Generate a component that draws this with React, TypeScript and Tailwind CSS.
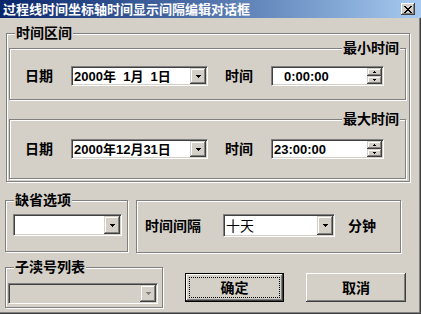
import React from 'react';

const sunken =
  'border border-t-[#808080] border-l-[#808080] border-r-white border-b-white shadow-[inset_1px_1px_0_#404040,inset_-1px_-1px_0_#d4d0c8] p-[1px]';
const comboBtn =
  'bg-[#d4d0c8] shadow-[inset_-1px_-1px_0_#404040,inset_1px_1px_0_#d4d0c8,inset_-2px_-2px_0_#808080,inset_2px_2px_0_#fff]';
const pushBtn =
  'bg-[#d4d0c8] shadow-[inset_-1px_-1px_0_#404040,inset_1px_1px_0_#fff,inset_-2px_-2px_0_#808080]';
const etched = 'border border-[#808080] shadow-[inset_1px_1px_0_#fff,1px_1px_0_#fff]';

function Arrow({ color = '#000' }: { color?: string }) {
  return (
    <svg width="5" height="3" viewBox="0 0 5 3" shapeRendering="crispEdges">
      <path d="M0 0h5v1H0zM1 1h3v1H1zM2 2h1v1H2z" fill={color} />
    </svg>
  );
}

function Group({
  label,
  right,
  className,
  children,
}: {
  label?: string;
  right?: boolean;
  className: string;
  children?: React.ReactNode;
}) {
  return (
    <div className={`relative ${etched} ${className}`}>
      {label && (
        <span
          className={`absolute -top-[8px] ${right ? 'right-[5px]' : 'left-[8px]'} bg-[#d4d0c8] px-[1px] text-[14px] leading-[14px] font-bold`}
        >
          {label}
        </span>
      )}
      {children}
    </div>
  );
}

function Combo({
  className,
  text,
  disabled,
  textClass = '',
}: {
  className: string;
  text?: string;
  disabled?: boolean;
  textClass?: string;
}) {
  return (
    <div className={`${sunken} flex ${disabled ? 'bg-[#d4d0c8]' : 'bg-white'} ${className}`}>
      <div className={`flex-1 flex items-center whitespace-pre overflow-hidden ${textClass}`}>{text}</div>
      <div className={`w-[16px] flex items-center justify-center ${comboBtn}`}>
        <Arrow color={disabled ? '#808080' : '#000'} />
      </div>
    </div>
  );
}

function Spin({ text, pad }: { text: string; pad: string }) {
  return (
    <div className={`${sunken} flex bg-white w-[113px] h-[20px]`}>
      <div className={`flex-1 flex items-center text-[13px] font-bold ${pad}`}>{text}</div>
      <div className="w-[15px] flex flex-col">
        <div className={`flex-1 flex items-center justify-center ${comboBtn}`}>
          <svg width="3" height="2" viewBox="0 0 3 2" shapeRendering="crispEdges">
            <path d="M1 0h1v1H1zM0 1h3v1H0z" fill="#000" />
          </svg>
        </div>
        <div className={`flex-1 flex items-center justify-center ${comboBtn}`}>
          <svg width="3" height="2" viewBox="0 0 3 2" shapeRendering="crispEdges">
            <path d="M0 0h3v1H0zM1 1h1v1H1z" fill="#000" />
          </svg>
        </div>
      </div>
    </div>
  );
}

function TimeRow({ date, time, timePad, top }: { date: string; time: string; timePad: string; top: string }) {
  return (
    <div className={`flex items-center pl-[15px] ${top}`}>
      <span className="w-[46px] text-[14px] font-bold">日期</span>
      <Combo className="w-[137px] h-[20px]" text={date} textClass="text-[13px] font-bold pl-[1px]" />
      <span className="ml-[17px] w-[46px] text-[14px] font-bold">时间</span>
      <Spin text={time} pad={timePad} />
    </div>
  );
}

export default function App() {
  return (
    <div className="relative w-[421px] h-[314px] bg-[#d4d0c8] text-black font-['Liberation_Sans','Noto_Sans_CJK_SC',sans-serif] leading-none shadow-[inset_-1px_-1px_0_#404040,inset_-2px_-2px_0_#808080] overflow-hidden">
      <div className="h-[18px] flex items-center justify-between bg-linear-to-r from-[#0a246a] to-[#a6caf0] pl-[3px] pr-[6px]">
        <span className="text-white text-[13px] font-bold">过程线时间坐标轴时间显示间隔编辑对话框</span>
        <div className={`w-[14px] h-[12px] flex items-center justify-center ${pushBtn}`}>
          <svg width="8" height="7" viewBox="0 0 8 7" shapeRendering="crispEdges">
            <path
              d="M0 0h2v1H0zM6 0h2v1H6zM1 1h2v1H1zM5 1h2v1H5zM2 2h4v1H2zM3 3h2v1H3zM2 4h4v1H2zM1 5h2v1H1zM5 5h2v1H5zM0 6h2v1H0zM6 6h2v1H6z"
              fill="#000"
            />
          </svg>
        </div>
      </div>

      <div className="pl-[6px] pt-[15px]">
        <Group label="时间区间" className="w-[404px] h-[149px]">
          <Group label="最小时间" right className="ml-[2px] mt-[14px] w-[397px] h-[52px]">
            <TimeRow date={'2000年\u20071月\u20071日'} time="0:00:00" timePad="pl-[11px]" top="pt-[17px]" />
          </Group>
          <Group label="最大时间" right className="ml-[2px] mt-[19px] w-[397px] h-[60px]">
            <TimeRow date="2000年12月31日" time="23:00:00" timePad="pl-[1px]" top="pt-[19px]" />
          </Group>
        </Group>
      </div>

      <div className="flex items-start pl-[5px] mt-[18px]">
        <Group label="缺省选项" className="w-[123px] h-[52px]">
          <Combo className="ml-[7px] mt-[13px] w-[109px] h-[22px]" />
        </Group>
        <Group className="ml-[8px] w-[265px] h-[53px]">
          <div className="flex items-center pl-[8px] pt-[13px]">
            <span className="w-[78px] text-[14px] font-bold">时间间隔</span>
            <Combo className="w-[112px] h-[23px]" text="十天" textClass="text-[14px] pl-[1px]" />
            <span className="ml-[13px] text-[14px] font-bold">分钟</span>
          </div>
        </Group>
      </div>

      <div className="flex items-start pl-[5px] mt-[14px]">
        <Group label="子渎号列表" className="w-[158px] h-[41px]">
          <Combo className="ml-[2px] mt-[15px] w-[150px] h-[21px]" disabled />
        </Group>
        <button
          className={`relative ml-[22px] mt-[6px] w-[99px] h-[29px] border border-black flex items-center justify-center text-[14px] font-bold ${pushBtn}`}
        >
          <span className="absolute inset-[3px] border border-dotted border-black" />
          确定
        </button>
        <button
          className={`ml-[22px] mt-[6px] w-[100px] h-[29px] flex items-center justify-center text-[14px] font-bold ${pushBtn}`}
        >
          取消
        </button>
      </div>
    </div>
  );
}
